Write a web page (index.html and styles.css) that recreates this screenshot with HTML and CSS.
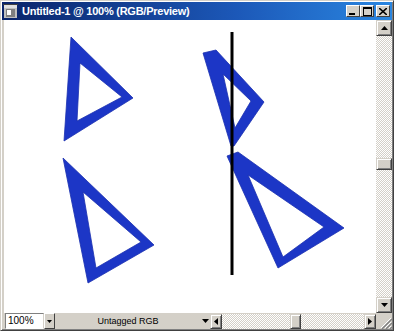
FILE: index.html
```html
<!DOCTYPE html>
<html>
<head>
<meta charset="utf-8">
<link rel="stylesheet" href="styles.css">
</head>
<body>
<div class="window">
  <div class="titlebar">
    <svg class="appicon" width="15" height="15" viewBox="0 0 15 15">
      <rect x="1" y="1" width="13" height="13" fill="#c0c0c0"/>
      <rect x="1" y="1" width="13" height="3" fill="#e0e0e0"/>
      <rect x="3" y="5" width="9" height="8" fill="#808080"/>
      <rect x="4" y="6" width="4" height="5" fill="#ffffff"/>
      <rect x="0" y="0" width="15" height="1" fill="#404040"/>
    </svg>
    <span class="title">Untitled-1 @ 100% (RGB/Preview)</span>
    <div class="tbtns">
      <div class="tbtn"><svg width="8" height="7" viewBox="0 0 8 7"><rect x="0" y="5" width="6" height="2" fill="#000"/></svg></div>
      <div class="tbtn"><svg width="9" height="9" viewBox="0 0 9 9"><rect x="0.5" y="0.5" width="8" height="8" fill="none" stroke="#000"/><rect x="0" y="0" width="9" height="2" fill="#000"/></svg></div>
      <div class="tbtn close"><svg width="8" height="7" viewBox="0 0 8 7"><path d="M0 0L8 7M8 0L0 7" stroke="#000" stroke-width="1.6"/></svg></div>
    </div>
  </div>
  <div class="main">
    <div class="canvas">
      <svg class="art" width="374" height="292" viewBox="2 20 374 292">
        <g fill="#1c36c6" fill-rule="evenodd" stroke="#1a30b0" stroke-width="0.8" stroke-linejoin="round">
          <path d="M71 37L133 98L64 141Z M80 63L122 97L77 121Z"/>
          <path d="M203 53L216 50L264 102L234 146L231 146Z M223 74L251 101L235 128Z"/>
          <path d="M63 158L154 245L88 283Z M83 192L141 242L96 268Z"/>
          <path d="M227 156L238 152L344 228L278 268Z M248 175L324 227L283 257Z"/>
        </g>
        <line x1="232" y1="32" x2="232" y2="275" stroke="#000" stroke-width="3"/>
      </svg>
    </div>
    <div class="vscroll">
      <div class="sbtn"><svg width="7" height="4" viewBox="0 0 7 4"><path d="M3.5 0L7 4H0Z" fill="#000"/></svg></div>
      <div class="track vtrack">
        <div class="vspace1"></div>
        <div class="thumb vthumb"></div>
      </div>
      <div class="sbtn"><svg width="7" height="4" viewBox="0 0 7 4"><path d="M0 0H7L3.5 4Z" fill="#000"/></svg></div>
    </div>
  </div>
  <div class="bottom">
    <div class="zoombox">100%</div>
    <div class="zbtn"><svg width="5" height="3" viewBox="0 0 5 3"><path d="M0 0H5L2.5 3Z" fill="#000"/></svg></div>
    <div class="status"><span class="stext">Untagged RGB</span></div>
    <div class="sarrow"><svg width="7" height="4" viewBox="0 0 7 4"><path d="M0 0H7L3.5 4Z" fill="#000"/></svg></div>
    <div class="hscroll">
      <div class="sbtn h"><svg width="4" height="7" viewBox="0 0 4 7"><path d="M0 3.5L4 0V7Z" fill="#000"/></svg></div>
      <div class="track htrack">
        <div class="hspace1"></div>
        <div class="thumb hthumb"></div>
      </div>
      <div class="sbtn h"><svg width="4" height="7" viewBox="0 0 4 7"><path d="M4 3.5L0 0V7Z" fill="#000"/></svg></div>
    </div>
    <div class="grip">
      <svg width="12" height="12" viewBox="0 0 12 12">
        <path d="M11 1L1 11M11 5L5 11M11 9L9 11" stroke="#fff" stroke-width="1"/>
        <path d="M12 2L2 12M12 6L6 12M12 10L10 12" stroke="#808080" stroke-width="1.4"/>
      </svg>
    </div>
  </div>
</div>
</body>
</html>
```
FILE: styles.css
```css
html, body {
  margin: 0;
  padding: 0;
  background: #d4d0c8;
}
.window {
  width: 394px;
  height: 331px;
  box-sizing: border-box;
  border-top: 1px solid #d4d0c8;
  border-left: 1px solid #d4d0c8;
  border-right: 1px solid #404040;
  border-bottom: 1px solid #404040;
  box-shadow: inset 1px 1px 0 #ffffff, inset -1px -1px 0 #808080;
  padding: 1px;
  display: flex;
  flex-direction: column;
  font-family: "Liberation Sans", Arial, sans-serif;
}
.titlebar {
  height: 18px;
  flex: none;
  background: linear-gradient(to right, #0a246a 0%, #1c58b8 60%, #2a86e0 100%);
  display: flex;
  align-items: center;
  padding-left: 1px;
  padding-right: 2px;
}
.appicon {
  flex: none;
  margin-right: 4px;
}
.title {
  color: #fff;
  font-weight: bold;
  font-size: 11px;
  letter-spacing: -0.25px;
  flex: 1;
  white-space: nowrap;
}
.tbtns {
  display: flex;
  flex: none;
}
.tbtn {
  width: 14px;
  height: 12px;
  box-sizing: border-box;
  background: #d4d0c8;
  border-top: 1px solid #fff;
  border-left: 1px solid #fff;
  border-right: 1px solid #404040;
  border-bottom: 1px solid #404040;
  display: flex;
  align-items: center;
  justify-content: center;
}
.tbtn.close {
  margin-left: 2px;
}
.main {
  flex: 1;
  display: flex;
  min-height: 0;
}
.canvas {
  flex: 1;
  background: #fff;
  overflow: hidden;
  border-left: 2px solid #d4d0c8;
}
.art {
  display: block;
  margin-left: -2px;
}
.vscroll {
  width: 16px;
  flex: none;
  display: flex;
  flex-direction: column;
}
.sbtn {
  width: 16px;
  height: 16px;
  flex: none;
  box-sizing: border-box;
  background: #d4d0c8;
  border-top: 1px solid #d4d0c8;
  border-left: 1px solid #d4d0c8;
  border-right: 1px solid #404040;
  border-bottom: 1px solid #404040;
  box-shadow: inset 1px 1px 0 #fff, inset -1px -1px 0 #808080;
  display: flex;
  align-items: center;
  justify-content: center;
}
.sbtn.h {
  width: 12px;
  height: 15px;
}
.track {
  flex: 1;
  background: repeating-conic-gradient(#d4d0c8 0 25%, #ffffff 0 50%) 0 0 / 2px 2px;
  display: flex;
}
.vtrack {
  flex-direction: column;
}
.vspace1 {
  height: 122px;
  flex: none;
}
.thumb {
  box-sizing: border-box;
  background: #d4d0c8;
  border-top: 1px solid #d4d0c8;
  border-left: 1px solid #d4d0c8;
  border-right: 1px solid #404040;
  border-bottom: 1px solid #404040;
  box-shadow: inset 1px 1px 0 #fff, inset -1px -1px 0 #808080;
}
.vthumb {
  height: 12px;
  width: 16px;
}
.bottom {
  height: 16px;
  flex: none;
  display: flex;
  align-items: stretch;
}
.zoombox {
  width: 39px;
  margin-left: 3px;
  box-sizing: border-box;
  background: #fff;
  border-top: 1px solid #808080;
  border-left: 1px solid #808080;
  border-right: 1px solid #d4d0c8;
  border-bottom: 1px solid #fff;
  font-size: 10px;
  line-height: 14px;
  padding-left: 2px;
  color: #000;
}
.zbtn {
  width: 11px;
  box-sizing: border-box;
  background: #d4d0c8;
  border-top: 1px solid #fff;
  border-left: 1px solid #fff;
  border-right: 1px solid #404040;
  border-bottom: 1px solid #404040;
  display: flex;
  align-items: center;
  justify-content: center;
}
.status {
  width: 146px;
  display: flex;
  align-items: center;
  justify-content: center;
  font-size: 9px;
  color: #000;
}
.sarrow {
  width: 9px;
  display: flex;
  align-items: center;
  justify-content: center;
}
.hscroll {
  flex: 1;
  display: flex;
  align-items: center;
}
.htrack {
  height: 15px;
  align-items: stretch;
}
.hspace1 {
  width: 68px;
  flex: none;
}
.hthumb {
  width: 11px;
}
.grip {
  width: 16px;
  flex: none;
  display: flex;
  align-items: flex-end;
  justify-content: flex-end;
}
```
